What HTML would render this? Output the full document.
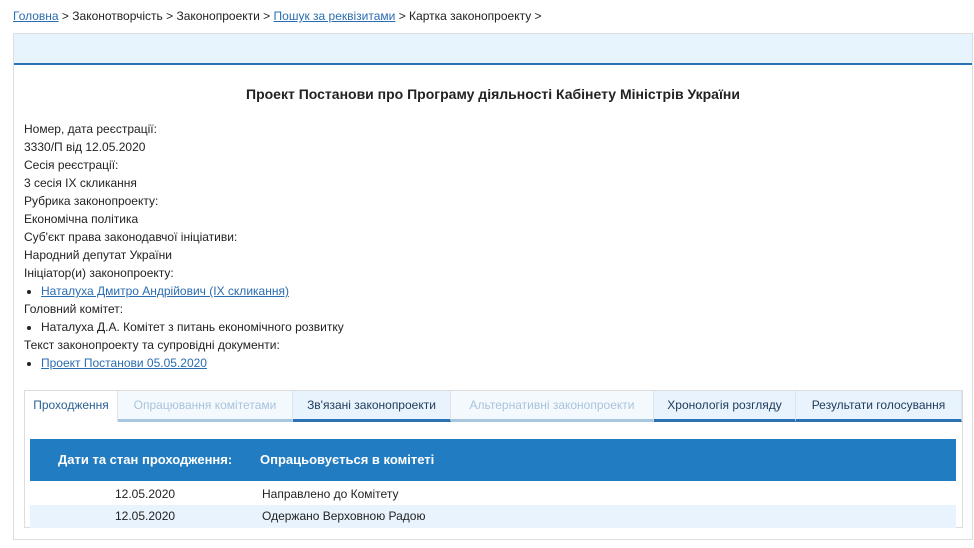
<!DOCTYPE html>
<html><head><meta charset="utf-8"><style>
*{margin:0;padding:0;box-sizing:border-box}
body{width:974px;height:548px;background:#fff;font-family:"Liberation Sans",Arial,sans-serif;font-size:12px;color:#222;position:relative;overflow:hidden}
a{color:#2a6cb0;text-decoration:underline}
.bc{position:absolute;left:13px;top:8px;line-height:16px}
.box{position:absolute;left:13px;top:33px;width:960px;height:507px;border:1px solid #ddd}
.hdr{height:31px;background:#e8f4fd;border-bottom:2px solid #2b72b4}
.title{position:absolute;left:0;right:0;top:52px;text-align:center;font-weight:bold;font-size:14px}
.info{position:absolute;left:10px;top:86px;line-height:18px}
.info li{list-style:none;padding-left:17px;position:relative}
.info li:before{content:"";position:absolute;left:3px;top:8px;width:4px;height:4px;border-radius:50%;background:#222}
.tabs{position:absolute;left:10px;top:356px;width:939px;height:138px;border:1px solid #ddd}
.tab{position:absolute;top:0;height:31px;line-height:28px;text-align:center;border-right:1px solid #dde3ea}
.t0{color:#2b5f95;background:#fff}
.tl{background:#f4f9fe;color:#a9c3dc;border-bottom:3px solid #a9c6e0}
.td{background:#e8f3fd;color:#1d3b5a;border-bottom:3px solid #2b72b4}
.th{position:absolute;left:5px;top:48px;width:926px;height:42px;background:#217cc2;color:#fff;font-weight:bold;font-size:13px;line-height:42px}
.row{position:absolute;left:5px;width:926px;height:23px;line-height:23px}
</style></head><body>
<div class="bc"><a href="#">Головна</a> &gt; Законотворчість &gt; Законопроекти &gt; <a href="#">Пошук за реквізитами</a> &gt; Картка законопроекту &gt;</div>
<div class="box">
<div class="hdr"></div>
<div class="title">Проект Постанови про Програму діяльності Кабінету Міністрів України</div>
<div class="info">
<div>Номер, дата реєстрації:</div><div>3330/П від 12.05.2020</div>
<div>Сесія реєстрації:</div><div>3 сесія IX скликання</div>
<div>Рубрика законопроекту:</div><div>Економічна політика</div>
<div>Суб'єкт права законодавчої ініціативи:</div><div>Народний депутат України</div>
<div>Ініціатор(и) законопроекту:</div><ul><li><a href="#">Наталуха Дмитро Андрійович (IX скликання)</a></li></ul>
<div>Головний комітет:</div><ul><li>Наталуха Д.А. Комітет з питань економічного розвитку</li></ul>
<div>Текст законопроекту та супровідні документи:</div><ul><li><a href="#">Проект Постанови 05.05.2020</a></li></ul>
</div>
<div class="tabs">
<div class="tab t0" style="left:0;width:93px">Проходження</div>
<div class="tab tl" style="left:93px;width:175px">Опрацювання комітетами</div>
<div class="tab td" style="left:268px;width:158px">Зв'язані законопроекти</div>
<div class="tab tl" style="left:426px;width:203px">Альтернативні законопроекти</div>
<div class="tab td" style="left:629px;width:142px">Хронологія розгляду</div>
<div class="tab td" style="left:771px;width:166px">Результати голосування</div>
<div class="th"><span style="position:absolute;left:28px">Дати та стан проходження:</span><span style="position:absolute;left:230px">Опрацьовується в комітеті</span></div>
<div class="row" style="top:92px"><span style="position:absolute;left:85px">12.05.2020</span><span style="position:absolute;left:232px">Направлено до Комітету</span></div>
<div class="row" style="top:114px;background:#e8f3fd"><span style="position:absolute;left:85px">12.05.2020</span><span style="position:absolute;left:232px">Одержано Верховною Радою</span></div>
</div>
</div>
</body></html>
